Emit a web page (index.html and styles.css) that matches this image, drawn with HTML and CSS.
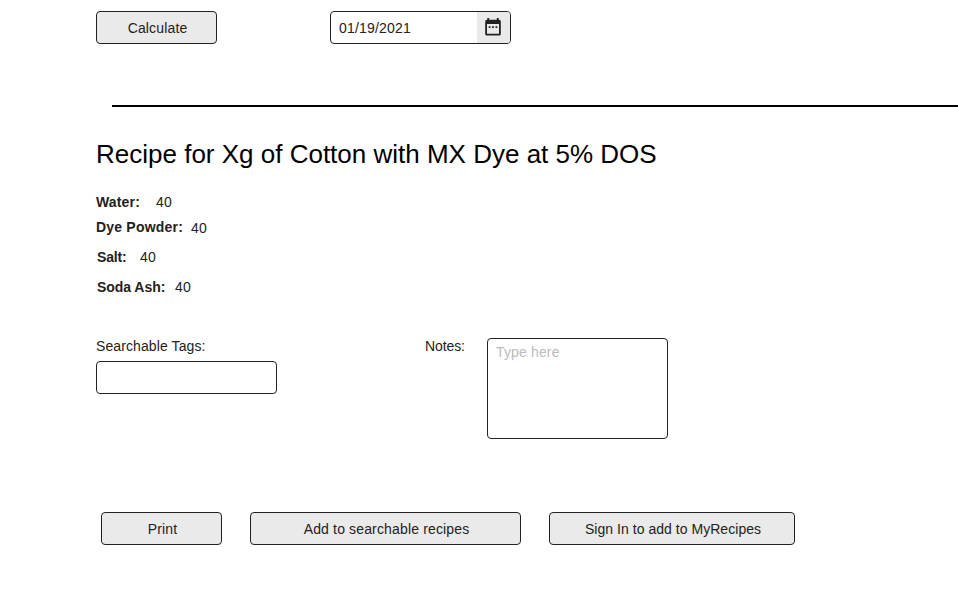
FILE: index.html
```html
<!DOCTYPE html>
<html lang="en">
<head>
<meta charset="utf-8">
<title>Dye Recipe</title>
<link rel="stylesheet" href="styles.css">
</head>
<body>
<main class="page">
  <div class="toolbar">
    <button class="btn btn-small" type="button">Calculate</button>
    <div class="date">
      <span class="date-value">01/19/2021</span>
      <span class="date-icon">
        <svg width="16" height="18" viewBox="0 0 16 18">
          <path fill="#222" fill-rule="evenodd" d="M2.300 0h1.900v1.800h7.600V0h1.900v1.800h.5A1.600 1.600 0 0 1 15.800 3.400v12.500a1.600 1.600 0 0 1-1.600 1.600H1.800A1.600 1.600 0 0 1 .2 15.900V3.400A1.600 1.600 0 0 1 1.800 1.800h.5zM2 6v9.700h12V6z"/>
          <path fill="#222" d="M3.700 8.200h1.800v1.700H3.700zM7.100 8.200h1.800v1.700H7.100zM10.500 8.200h1.800v1.700h-1.800z"/>
        </svg>
      </span>
    </div>
  </div>
  <hr class="rule">
  <h1 class="title">Recipe for Xg of Cotton with MX Dye at 5% DOS</h1>
  <dl class="amounts">
    <div class="amount water"><dt>Water:</dt><dd>40</dd></div>
    <div class="amount dye"><dt>Dye Powder:</dt><dd>40</dd></div>
    <div class="amount salt"><dt>Salt:</dt><dd>40</dd></div>
    <div class="amount soda"><dt>Soda Ash:</dt><dd>40</dd></div>
  </dl>
  <div class="fields">
    <div class="tags">
      <label class="label" for="tags">Searchable Tags:</label>
      <input class="input" id="tags" type="text">
    </div>
    <div class="notes">
      <label class="label" for="notes">Notes:</label>
      <textarea class="textarea" id="notes" placeholder="Type here"></textarea>
    </div>
  </div>
  <div class="actions">
    <button class="btn btn-small" type="button">Print</button>
    <button class="btn btn-wide" type="button">Add to searchable recipes</button>
    <button class="btn btn-medium" type="button">Sign In to add to MyRecipes</button>
  </div>
</main>
</body>
</html>
```
FILE: styles.css
```css
* { box-sizing: border-box; margin: 0; padding: 0; }
body {
  background: #fff;
  color: #222;
  font: 14px/16px "Liberation Sans", Arial, sans-serif;
  letter-spacing: 0.15px;
  overflow: hidden;
}
.page { height: 595px; padding: 11px 0 0 96px; }
.toolbar { display: flex; gap: 113px; }
.btn, .input, .textarea, .date {
  border: 1px solid #222;
  border-radius: 4px;
  font: inherit;
  letter-spacing: inherit;
  color: inherit;
  height: 33px;
}
.btn { background: #eaeaea; padding: 1px 0 0 2px; }
.btn-small { width: 121px; }
.btn-wide { width: 271px; }
.btn-medium { width: 246px; letter-spacing: 0.04px; }
.date { display: flex; width: 181px; overflow: hidden; }
.date-value { flex: 1; padding: 8px 0 0 8px; letter-spacing: 0.2px; }
.date-icon { width: 33px; background: #eaeaea; padding: 6px 0 0 8px; }
.date-icon svg { display: block; }
.rule { border: 0; height: 2px; background: #000; margin: 61px 0 0 16px; }
.title {
  margin-top: 32px;
  font-size: 26px;
  line-height: 30px;
  font-weight: 400;
  letter-spacing: 0;
  color: #000;
}
.amounts { margin-top: 25px; height: 102px; }
.amount { display: flex; height: 16px; }
.amount dt { font-weight: 700; }
.water dt { width: 60px; }
.dye { margin-top: 9px; }
.dye dt { width: 95px; letter-spacing: 0.2px; }
.dye dd { padding-top: 1px; }
.salt { margin-top: 14px; padding-left: 1px; }
.salt dt { width: 43px; letter-spacing: -0.2px; }
.soda { margin-top: 14px; padding-left: 1px; }
.soda dt { width: 78px; letter-spacing: -0.05px; }
.fields { display: flex; margin-top: 42px; height: 101px; }
.tags { width: 329px; }
.label { display: block; }
.tags .label { letter-spacing: 0.1px; }
.input { display: block; width: 181px; margin-top: 7px; padding: 0 8px; background: #fff; }
.notes { display: flex; }
.notes .label { width: 62px; letter-spacing: -0.1px; }
.textarea { width: 181px; height: 101px; padding: 5px 8px; resize: none; background: #fff; }
.textarea::placeholder { color: #bbb; opacity: 1; }
.actions { display: flex; gap: 28px; margin: 73px 0 0 5px; }
```
